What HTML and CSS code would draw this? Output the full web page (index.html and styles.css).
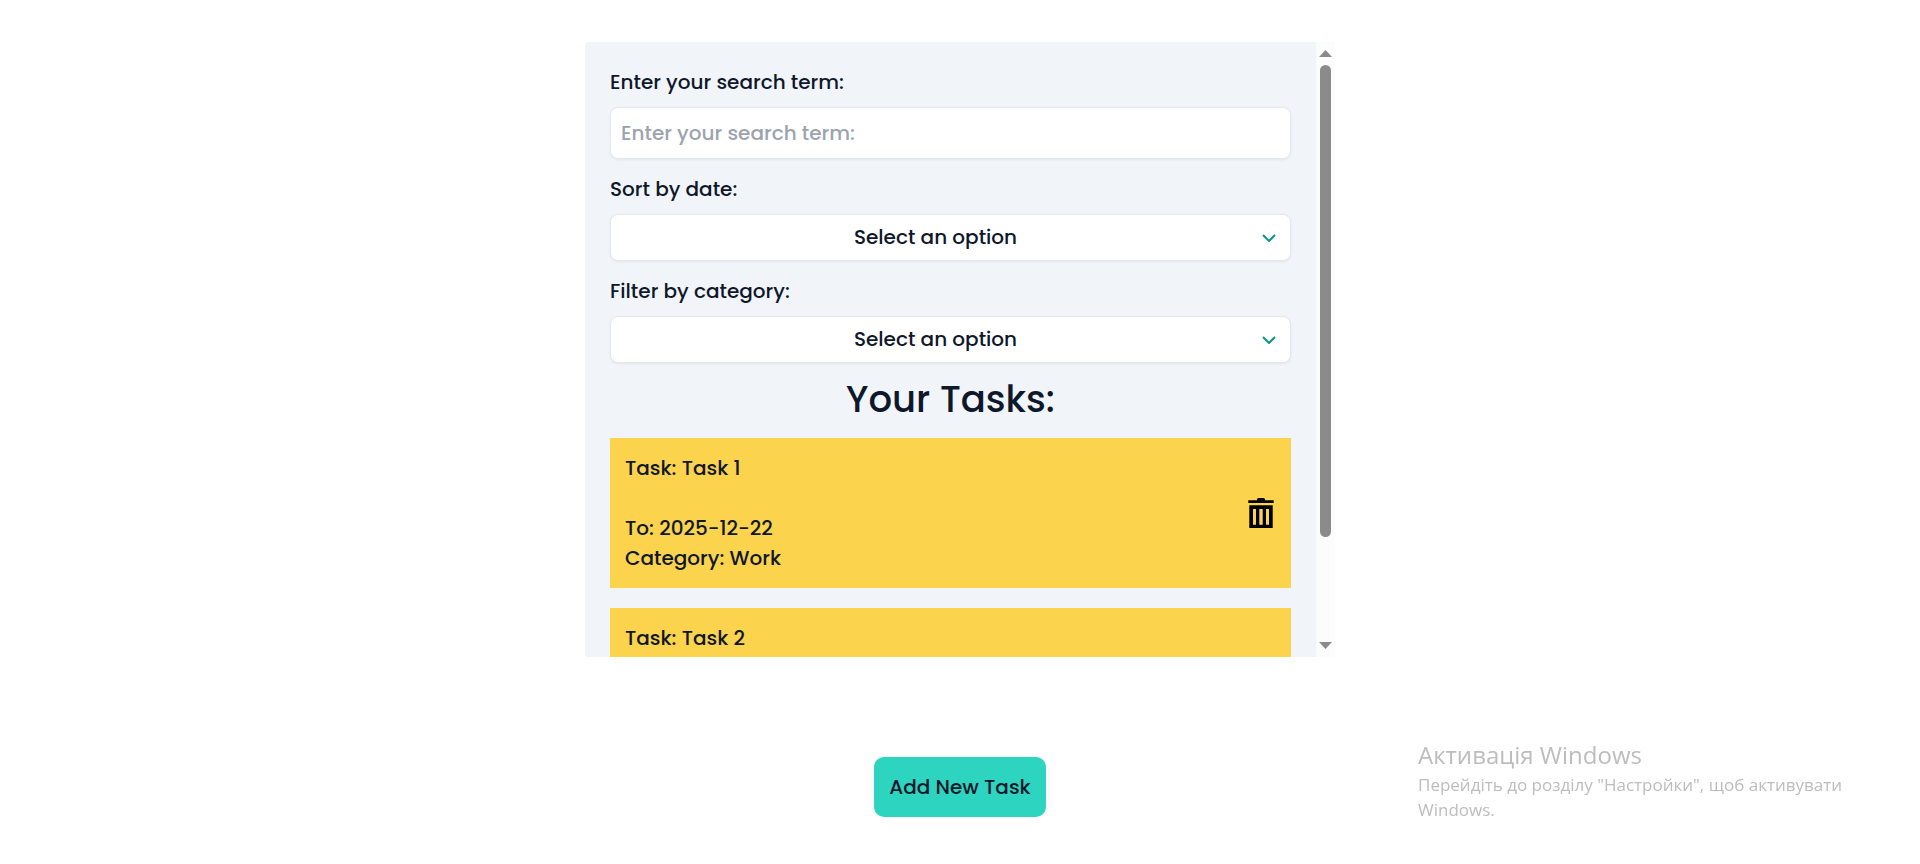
FILE: index.html
```html
<!DOCTYPE html>
<html lang="en">
<head>
  <meta charset="utf-8">
  <meta name="viewport" content="width=device-width, initial-scale=1">
  <title>Your Tasks</title>
  <link rel="stylesheet" href="styles.css">
</head>
<body>
  <main class="page">
    <section class="panel">
      <div class="panel-content">
        <div class="field">
          <label for="search">Enter your search term:</label>
          <input class="control search" id="search" type="text" placeholder="Enter your search term:">
        </div>
        <div class="field">
          <label for="sort">Sort by date:</label>
          <div class="select-wrap">
            <select class="control select" id="sort">
              <option>Select an option</option>
              <option>Newest first</option>
              <option>Oldest first</option>
            </select>
            <svg class="chevron" viewBox="0 0 14 8" aria-hidden="true"><path d="M1 1l6 6 6-6"/></svg>
          </div>
        </div>
        <div class="field">
          <label for="category">Filter by category:</label>
          <div class="select-wrap">
            <select class="control select" id="category">
              <option>Select an option</option>
              <option>Work</option>
            </select>
            <svg class="chevron" viewBox="0 0 14 8" aria-hidden="true"><path d="M1 1l6 6 6-6"/></svg>
          </div>
        </div>
        <h1 class="title">Your Tasks:</h1>
        <ul class="tasks">
          <li class="task">
            <div>
              <p class="task-name">Task: Task 1</p>
              <p>To: 2025-12-22</p>
              <p>Category: Work</p>
            </div>
            <button class="delete" type="button" aria-label="Delete Task 1">
              <svg class="trash" viewBox="0 0 26 30" aria-hidden="true"><path fill-rule="evenodd" d="M9 2.300V1.500Q9 0 10.500 0h5Q17 0 17 1.500v.8h8.700V5H.3V2.300zM1.300 7.300h23.400V30H1.300zM5 11v15.700h3V11zm6.300 0v15.700h3.400V11zm6.700 0v15.700h3V11z"/></svg>
            </button>
          </li>
          <li class="task">
            <p class="task-name">Task: Task 2</p>
          </li>
        </ul>
      </div>
      <div class="scrollbar" aria-hidden="true">
        <svg class="arrow" viewBox="0 0 13 7"><path d="M6.500 0L13 7H0z"/></svg>
        <div class="track"><div class="thumb"></div></div>
        <svg class="arrow" viewBox="0 0 13 7"><path d="M0 0h13L6.500 7z"/></svg>
      </div>
    </section>
    <button class="add" type="button">Add New Task</button>
  </main>
  <aside class="watermark" lang="uk">
    <p class="watermark-title">Активація Windows</p>
    <p>Перейдіть до розділу "Настройки", щоб активувати Windows.</p>
  </aside>
</body>
</html>
```
FILE: styles.css
```css
* {
  box-sizing: border-box;
}

body {
  margin: 0;
  background: #fff;
  color: #0f172a;
  font: 500 20px/30px Poppins, Inter, sans-serif;
}

p {
  margin: 0;
}

.page {
  display: flex;
  flex-direction: column;
  align-items: center;
  gap: 100px;
  padding: 42px 20px 20px;
}

.panel {
  display: flex;
  width: 100%;
  max-width: 750px;
  height: calc(100vh - 249px);
  overflow: hidden;
  border-radius: 3px;
  background: #f1f5f9;
}

.panel-content {
  flex: 1;
  display: flex;
  flex-direction: column;
  gap: 15px;
  padding: 25px;
  overflow-y: auto;
  scrollbar-width: none;
}

.field {
  display: flex;
  flex-direction: column;
  gap: 10px;
}

.control {
  width: 100%;
  border: 1px solid #e2e8f0;
  border-radius: 8px;
  background: #fff;
  box-shadow: 0 1px 3px rgb(0 0 0 / 6%);
  color: inherit;
  font: inherit;
}

.search {
  height: 52px;
  padding: 10px;
}

.search::placeholder {
  color: #9ca3af;
}

.select-wrap {
  position: relative;
  display: flex;
}

.select {
  height: 47px;
  padding: 0 40px 2px 10px;
  appearance: none;
  text-align: center;
  text-align-last: center;
}

.chevron {
  position: absolute;
  top: 20px;
  right: 15px;
  width: 14px;
  height: 8px;
  fill: none;
  stroke: #0d9488;
  stroke-width: 2;
  pointer-events: none;
}

.title {
  margin: 0;
  padding-bottom: 2px;
  font-size: 37px;
  font-weight: 500;
  line-height: 43px;
  text-align: center;
}

.tasks {
  display: flex;
  flex-direction: column;
  gap: 20px;
  margin: 0;
  padding: 0;
  list-style: none;
}

.task {
  display: flex;
  align-items: center;
  justify-content: space-between;
  min-height: 150px;
  padding: 15px;
  background: #fcd34d;
}

.task-name {
  align-self: flex-start;
  margin-bottom: 30px;
}

.delete {
  display: flex;
  padding: 0;
  border: 0;
  background: none;
  cursor: pointer;
}

.trash {
  width: 30px;
  height: 30px;
}

.scrollbar {
  display: flex;
  flex-direction: column;
  align-items: center;
  gap: 8px;
  width: 19px;
  padding: 8px 0;
  background: #fcfcfc;
}

.arrow {
  width: 13px;
  height: 7px;
  fill: #8b8b8b;
}

.track {
  flex: 1;
}

.thumb {
  width: 11px;
  height: 83%;
  border-radius: 6px;
  background: #8b8b8b;
}

.add {
  padding: 15px;
  border: 0;
  border-radius: 10px;
  background: #2dd4bf;
  color: inherit;
  font: inherit;
  cursor: pointer;
}

.watermark {
  position: fixed;
  right: 72px;
  bottom: 42px;
  width: 430px;
  color: #bdbdbd;
  font: 400 17px/25px "Open Sans", "Noto Sans", sans-serif;
  pointer-events: none;
}

.watermark-title {
  font-size: 24px;
  line-height: 34px;
}
```
